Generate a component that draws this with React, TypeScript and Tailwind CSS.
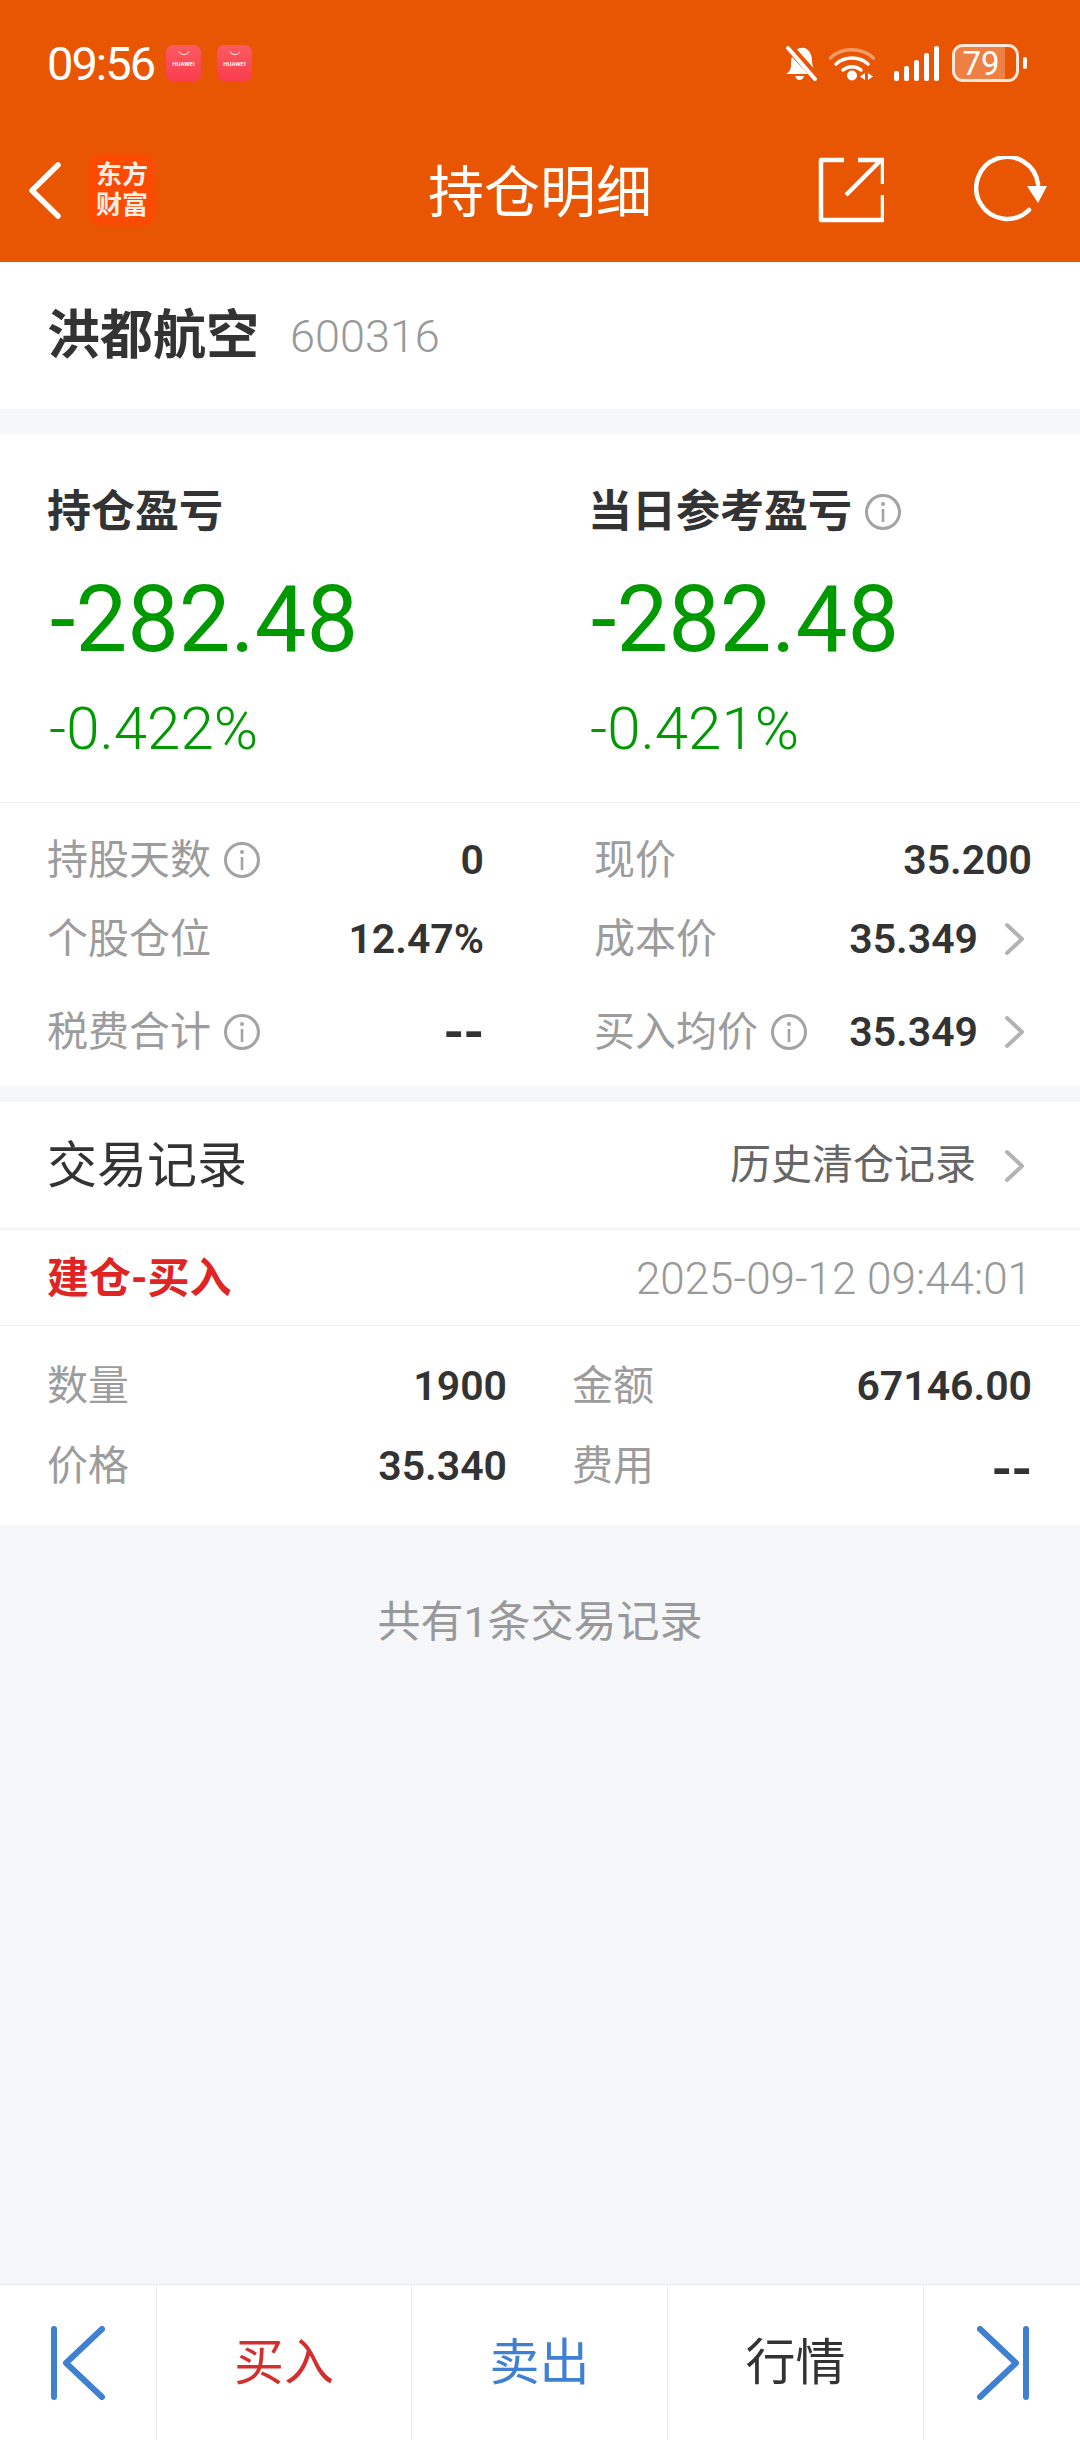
import React from "react";

function InfoIcon({ className = "w-[38px] h-[38px]" }: { className?: string }) {
  return (
    <svg viewBox="0 0 38 38" className={`${className} shrink-0`} fill="none">
      <circle cx="19" cy="19" r="16.5" stroke="#a3a3a3" strokeWidth="3" />
      <circle cx="19" cy="11" r="2" fill="#a3a3a3" />
      <path d="M19 16v13" stroke="#a3a3a3" strokeWidth="2.6" />
    </svg>
  );
}

function Chevron() {
  return (
    <svg viewBox="0 0 22 34" className="w-[22px] h-[34px] shrink-0" fill="none">
      <path d="M3 3l15 14L3 31" stroke="#b3b3b3" strokeWidth="4" strokeLinecap="round" strokeLinejoin="round" />
    </svg>
  );
}

function HuaweiBadge() {
  return (
    <div className="w-[35px] h-[36px] rounded-[7px] bg-gradient-to-b from-[#fb5a62] to-[#f93c4c] flex flex-col items-center pt-[6px]">
      <svg viewBox="0 0 12 5" className="w-[12px] h-[5px]" fill="none">
        <path d="M1 0.5c1 4 9 4 10 0" stroke="#fff" strokeWidth="0.9" />
      </svg>
      <span className="text-[6px] leading-[8px] mt-[4px] font-semibold text-white">HUAWEI</span>
    </div>
  );
}

function StatusIcons() {
  return (
    <div className="flex items-center">
      <svg viewBox="0 0 32 36" className="w-[32px] h-[36px]">
        <path d="M11 5c4-3 9-3 12 0 3 3 4 7 4 11 0 3 1 6 2 9z" fill="#fff" />
        <path d="M7 12l16 17H1c3-2 5-4 5-9 0-3 0-6 1-8z" fill="#fff" />
        <path d="M10 31h9c-1 3-3 4-4.500 4S11 34 10 31z" fill="#fff" />
        <path d="M1 0l31 35" stroke="#e85604" strokeWidth="2" transform="translate(4 -2)" />
        <path d="M3 3l27 31" stroke="#fff" strokeWidth="4" strokeLinecap="round" />
      </svg>
      <svg viewBox="0 0 46 35" className="w-[46px] h-[35px] ml-[12px]" fill="none">
        <path d="M1.500 12C12 1 33 1 44.500 12" stroke="#fff" strokeOpacity="0.4" strokeWidth="3.500" strokeLinecap="round" />
        <path d="M7 18c9-8 23-8 32 0" stroke="#fff" strokeWidth="3.500" strokeLinecap="round" />
        <path d="M14 24c5-4.500 13-4.500 18 0" stroke="#fff" strokeWidth="3.500" strokeLinecap="round" />
        <circle cx="23" cy="29.500" r="5" fill="#fff" />
        <path d="M36 27v7l-5-3.500zM39 27v7l5-3.500z" fill="#fff" />
      </svg>
      <div className="flex items-end gap-[5px] h-[35px] ml-[19px]">
        <span className="w-[5px] h-[10px] rounded-[2px] bg-white" />
        <span className="w-[5px] h-[15px] rounded-[2px] bg-white" />
        <span className="w-[5px] h-[21px] rounded-[2px] bg-white" />
        <span className="w-[5px] h-[28px] rounded-[2px] bg-white" />
        <span className="w-[5px] h-[35px] rounded-[2px] bg-white" />
      </div>
      <div className="relative ml-[13px] w-[67px] h-[38px] rounded-[11px] border-[3px] border-[#fde9dc] overflow-hidden flex items-center">
        <div className="absolute left-0 top-0 bottom-0 w-[50px] bg-white/25" />
        <span className="relative w-[52px] text-center text-[33px] leading-none text-white">79</span>
      </div>
      <div className="ml-[4px] w-[4px] h-[12px] rounded-[2px] bg-white" />
    </div>
  );
}

function Value({ value }: { value: string }) {
  // the double dash is drawn longer than a plain hyphen in the app font
  if (value === "--") {
    return <span className="inline-block pt-[5px] text-[55px] leading-[41px] font-semibold text-[#333]">{value}</span>;
  }
  return <span className="text-[41px] leading-none font-semibold text-[#333]">{value}</span>;
}

function Stat({ label, value, info, arrow }: { label: string; value: string; info?: boolean; arrow?: boolean }) {
  return (
    <div className="flex items-center">
      <span className="text-[41px] leading-none text-[#9c9c9c]">{label}</span>
      {info ? <InfoIcon className="w-[38px] h-[38px] ml-[12px]" /> : null}
      <span className="flex-1 text-right">
        <Value value={value} />
      </span>
      {arrow ? (
        <span className="ml-[26px] w-[28px] flex">
          <Chevron />
        </span>
      ) : null}
    </div>
  );
}

function TradeCell({ label, value }: { label: string; value: string }) {
  return (
    <div className="flex items-center justify-between">
      <span className="text-[41px] leading-none text-[#9c9c9c]">{label}</span>
      <Value value={value} />
    </div>
  );
}

function Profit({ title, amount, percent, info }: { title: string; amount: string; percent: string; info?: boolean }) {
  return (
    <div className="flex flex-col">
      <div className="flex items-center h-[46px] gap-[12px] pt-[2px]">
        <span className="text-[44px] leading-none font-bold text-[#333]">{title}</span>
        {info ? <InfoIcon /> : null}
      </div>
      <div className="mt-[36px] h-[100px] pl-[3px] flex items-center text-[92px] leading-none text-[#009a00]">{amount}</div>
      <div className="mt-[34px] h-[50px] pl-[2px] flex items-center text-[60px] leading-none font-light text-[#009a00]">{percent}</div>
    </div>
  );
}

export default function App() {
  return (
    <div className="w-[1080px] h-[2440px] flex flex-col bg-[#f6f7f9] font-[Roboto,'Noto_Sans_CJK_SC',sans-serif] overflow-hidden">
      <header className="h-[262px] bg-[#e85604] flex flex-col shrink-0">
        <div className="h-[126px] pt-[44px] pl-[47px] pr-[53px] flex items-start justify-between">
          <div className="flex items-center h-[38px]">
            <span className="w-[119px] text-[47px] leading-none tracking-[-2px] text-white">09:56</span>
            <HuaweiBadge />
            <span className="w-[16px]" />
            <HuaweiBadge />
          </div>
          <StatusIcons />
        </div>
        <div className="relative flex-1 flex items-center pl-[28px] pr-[32px] pb-[8px]">
          <svg viewBox="0 0 33 57" className="w-[33px] h-[57px]" fill="none">
            <path d="M30 3L4 28.500 30 54" stroke="#fff" strokeWidth="5.500" strokeLinecap="round" strokeLinejoin="round" />
          </svg>
          <div className="ml-[27px] w-[68px] h-[72px] rounded-[14px] bg-[#fb4b02] flex flex-col items-center justify-center text-[26px] leading-[30px] font-bold text-[#fdeee5]">
            <span>东方</span>
            <span>财富</span>
          </div>
          <div className="absolute left-0 right-0 top-[37px] text-center text-[56px] leading-[60px] text-white">持仓明细</div>
          <div className="ml-auto flex items-center gap-[90px]">
            <svg viewBox="0 0 66 66" className="w-[66px] h-[66px]" fill="none">
              <path d="M26 3H3v60h62V38" stroke="#fff" strokeWidth="4.500" strokeLinejoin="round" />
              <path d="M28 38L63 3M40 3h25v24" stroke="#fff" strokeWidth="4.500" />
            </svg>
            <svg viewBox="0 0 74 68" className="w-[74px] h-[68px]" fill="none">
              <path d="M55 54A31 31 0 1 1 64 28" stroke="#fff" strokeWidth="4.500" strokeLinecap="round" />
              <path d="M53 30h20L64 47z" fill="#fff" />
            </svg>
          </div>
        </div>
      </header>

      <section className="h-[147px] bg-white flex items-center pl-[47px] pt-[2px] shrink-0">
        <span className="text-[53px] leading-none font-bold text-[#333]">洪都航空</span>
        <span className="ml-[31px] text-[45px] leading-none font-light text-[#999]">600316</span>
      </section>

      <section className="mt-[25px] h-[652px] bg-white shrink-0 flex flex-col">
        <div className="h-[370px] border-b border-[#f2f2f2] pt-[54px] pl-[47px] grid grid-cols-[541px_1fr]">
          <Profit title="持仓盈亏" amount="-282.48" percent="-0.422%" />
          <Profit title="当日参考盈亏" amount="-282.48" percent="-0.421%" info />
        </div>
        <div className="pl-[47px] pr-[48px] pt-[17px] grid grid-cols-[437px_1fr] gap-x-[110px] grid-rows-[80px_78px_108px] items-center">
          <Stat label="持股天数" value="0" info />
          <Stat label="现价" value="35.200" />
          <Stat label="个股仓位" value="12.47%" />
          <Stat label="成本价" value="35.349" arrow />
          <Stat label="税费合计" value="--" info />
          <Stat label="买入均价" value="35.349" info arrow />
        </div>
      </section>

      <section className="mt-[16px] bg-white shrink-0 flex flex-col">
        <div className="h-[125px] flex items-center justify-between pl-[47px] pr-[54px] pt-[2px]">
          <span className="text-[50px] leading-none text-[#333]">交易记录</span>
          <div className="flex items-center gap-[28px]">
            <span className="text-[41px] leading-none text-[#666]">历史清仓记录</span>
            <Chevron />
          </div>
        </div>
        <div className="h-[4px] bg-[#f6f7f9]" />
        <div className="h-[95px] border-b border-[#f2f2f2] flex items-center justify-between pl-[47px] pr-[48px] pt-[2px]">
          <span className="text-[42px] leading-none font-bold text-[#e02424]">建仓-买入</span>
          <span className="text-[44px] leading-none font-light text-[#999]">2025-09-12 09:44:01</span>
        </div>
        <div className="h-[199px] pt-[20px] pl-[47px] pr-[48px] grid grid-cols-2 gap-x-[65px] grid-rows-[80px_81px] items-center">
          <TradeCell label="数量" value="1900" />
          <TradeCell label="金额" value="67146.00" />
          <TradeCell label="价格" value="35.340" />
          <TradeCell label="费用" value="--" />
        </div>
      </section>

      <div className="flex-1 pt-[72px] text-center text-[43px] leading-[50px] text-[#999]">共有1条交易记录</div>

      <nav className="h-[156px] shrink-0 bg-white border-t border-[#e9e9e9] grid grid-cols-[157px_255px_256px_256px_1fr] items-stretch">
        <div className="border-r border-[#ececec] flex items-center pl-[51px]">
          <svg viewBox="0 0 54 74" className="w-[54px] h-[74px]" fill="none">
            <path d="M3 3v68M51 3L15 37l36 34" stroke="#3f80d2" strokeWidth="6" strokeLinecap="round" strokeLinejoin="round" />
          </svg>
        </div>
        <div className="border-r border-[#ececec] flex items-center justify-center pt-[2px] text-[50px] text-[#d32f2f]">买入</div>
        <div className="border-r border-[#ececec] flex items-center justify-center pt-[2px] text-[50px] text-[#3f80d2]">卖出</div>
        <div className="border-r border-[#ececec] flex items-center justify-center pt-[2px] text-[50px] text-[#333]">行情</div>
        <div className="flex items-center pl-[53px]">
          <svg viewBox="0 0 52 74" className="w-[52px] h-[74px]" fill="none">
            <path d="M49 3v68M3 3l36 34L3 71" stroke="#3f80d2" strokeWidth="6" strokeLinecap="round" strokeLinejoin="round" />
          </svg>
        </div>
      </nav>
    </div>
  );
}
